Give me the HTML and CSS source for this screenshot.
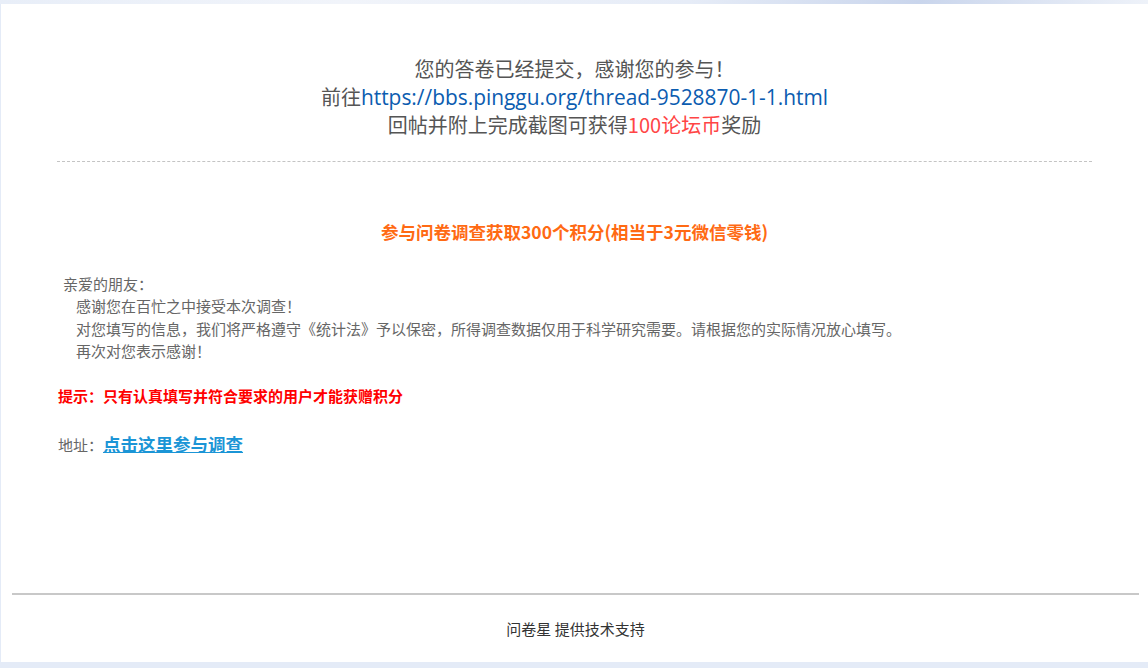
FILE: index.html
```html
<!DOCTYPE html>
<html lang="zh-CN">
<head>
    <meta charset="UTF-8">
    <title>问卷星</title>
    <link rel="stylesheet" href="styles.css">
</head>
<body>
    <div class="topstrip"></div>
    <div class="pagina">
        <!-- Mensagem de conclusão -->
        <div class="conclusao">
            <p>您的答卷已经提交，感谢您的参与！</p>
            <p>前往<a href="#" class="link-forum">https://bbs.pinggu.org/thread-9528870-1-1.html</a></p>
            <p>回帖并附上完成截图可获得<span class="vermelho">100论坛币</span>奖励</p>
        </div>

        <div class="conteudo">
            <h3 class="titulo-laranja">参与问卷调查获取300个积分(相当于3元微信零钱)</h3>

            <div class="carta">
                <p class="saudacao">亲爱的朋友：</p>
                <p class="recuo">感谢您在百忙之中接受本次调查！</p>
                <p class="recuo">对您填写的信息，我们将严格遵守《统计法》予以保密，所得调查数据仅用于科学研究需要。请根据您的实际情况放心填写。</p>
                <p class="recuo">再次对您表示感谢！</p>
            </div>

            <p class="dica">提示：只有认真填写并符合要求的用户才能获赠积分</p>

            <p class="endereco">地址：<a href="#">点击这里参与调查</a></p>
        </div>

        <!-- Rodapé -->
        <div class="rodape">
            <p>问卷星 提供技术支持</p>
        </div>
    </div>
</body>
</html>
```

FILE: styles.css
```css
* {
    margin: 0;
    padding: 0;
    box-sizing: border-box;
}

body {
    font-family: "Noto Sans CJK SC", "Noto Sans", sans-serif;
    background: #e4ebf7;
    color: #666;
    height: 668px;
    overflow: hidden;
}

.topstrip {
    height: 4px;
    background: linear-gradient(90deg, #e8eef8 0%, #f1f4fa 30%, #e6ecf7 60%, #c9d5ec 80%, #eef2f9 100%);
}

.pagina {
    margin-left: 1px;
    height: 658px;
    background: #fff;
    display: flex;
    flex-direction: column;
}

/* Mensagem de conclusão */
.conclusao {
    margin: 0 56px;
    padding-top: 51px;
    padding-bottom: 22px;
    border-bottom: 1px dashed #c4c4c4;
    text-align: center;
    font-size: 20px;
    line-height: 27.5px;
    color: #555;
}

.link-forum {
    font-family: "Open Sans", "Noto Sans", sans-serif;
    font-size: 20.9px;
    color: #0b5cb0;
    text-decoration: none;
}

.vermelho {
    color: #ff4545;
}

/* Conteúdo */
.conteudo {
    padding: 0 57px;
}

.titulo-laranja {
    margin-top: 58px;
    text-align: center;
    font-size: 17.5px;
    line-height: 24px;
    color: #ff6a13;
}

.carta {
    margin-top: 29px;
    font-size: 15px;
    line-height: 22.5px;
    color: #666;
}

.saudacao {
    padding-left: 5px;
}

.recuo {
    padding-left: 18px;
}

.dica {
    margin-top: 22px;
    font-size: 15px;
    font-weight: bold;
    line-height: 22px;
    color: #f00;
}

.endereco {
    margin-top: 25px;
    font-size: 15px;
    line-height: 24px;
    color: #666;
}

.endereco a {
    font-size: 17.5px;
    font-weight: bold;
    color: #1b95d6;
    text-decoration: underline;
}

/* Rodapé */
.rodape {
    margin: auto 9px 0 11px;
    border-top: 2px solid #c8c8c8;
    height: 69px;
    padding-top: 24px;
    text-align: center;
    font-size: 15px;
    line-height: 20px;
    color: #333;
}
```
